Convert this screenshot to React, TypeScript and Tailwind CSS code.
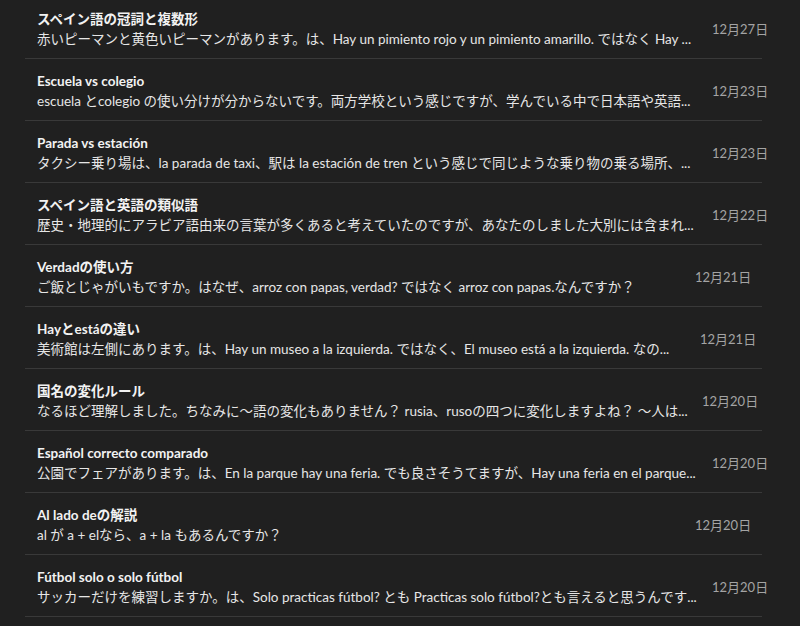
import React from 'react';

interface INote {
  title: string;
  body: string;
  date: string;
  dateClass: string;
}

const notes: INote[] = [
  {
    title: 'スペイン語の冠詞と複数形',
    body: '赤いピーマンと黄色いピーマンがあります。は、Hay un pimiento rojo y un pimiento amarillo. ではなく Hay ...',
    date: '12月27日',
    dateClass: 'ml-[19px]',
  },
  {
    title: 'Escuela vs colegio',
    body: 'escuela とcolegio の使い分けが分からないです。両方学校という感じですが、学んでいる中で日本語や英語...',
    date: '12月23日',
    dateClass: 'ml-[19px]',
  },
  {
    title: 'Parada vs estación',
    body: 'タクシー乗り場は、la parada de taxi、駅は la estación de tren という感じで同じような乗り物の乗る場所、...',
    date: '12月23日',
    dateClass: 'ml-[19px]',
  },
  {
    title: 'スペイン語と英語の類似語',
    body: '歴史・地理的にアラビア語由来の言葉が多くあると考えていたのですが、あなたのしました大別には含まれ...',
    date: '12月22日',
    dateClass: 'ml-[19px]',
  },
  {
    title: 'Verdadの使い方',
    body: 'ご飯とじゃがいもですか。はなぜ、arroz con papas, verdad? ではなく arroz con papas.なんですか？',
    date: '12月21日',
    dateClass: 'ml-[2px]',
  },
  {
    title: 'Hayとestáの違い',
    body: '美術館は左側にあります。は、Hay un museo a la izquierda. ではなく、El museo está a la izquierda. なの...',
    date: '12月21日',
    dateClass: 'ml-[7px]',
  },
  {
    title: '国名の変化ルール',
    body: 'なるほど理解しました。ちなみに〜語の変化もありません？ rusia、rusoの四つに変化しますよね？ 〜人は...',
    date: '12月20日',
    dateClass: 'ml-[9px]',
  },
  {
    title: 'Español correcto comparado',
    body: '公園でフェアがあります。は、En la parque hay una feria. でも良さそうてますが、Hay una feria en el parque...',
    date: '12月20日',
    dateClass: 'ml-[19px]',
  },
  {
    title: 'Al lado deの解説',
    body: 'al が a + elなら、a + la もあるんですか？',
    date: '12月20日',
    dateClass: 'ml-[2px]',
  },
  {
    title: 'Fútbol solo o solo fútbol',
    body: 'サッカーだけを練習しますか。は、Solo practicas fútbol? とも Practicas solo fútbol?とも言えると思うんです...',
    date: '12月20日',
    dateClass: 'ml-[19px]',
  },
];

const NoteRow: React.FC<{ note: INote }> = ({ note }) => (
  <div className="flex items-center border-b border-[#393939] pt-3 pb-[9px] pl-3">
    <div className="w-[656px] shrink-0 whitespace-nowrap">
      <div className="text-[13.5px] leading-5 font-bold text-[#f2f2f2]">{note.title}</div>
      <div className="text-[13.5px] leading-5 text-[#e6e6e6]">{note.body}</div>
    </div>
    <div className={`${note.dateClass} shrink-0 whitespace-nowrap pt-[2px] text-[13px] text-[#a4a4a4]`}>
      {note.date}
    </div>
  </div>
);

export default function App() {
  return (
    <div
      className="h-[626px] w-[800px] overflow-hidden bg-[#202020]"
      style={{ fontFamily: 'Lato, "Noto Sans CJK JP", sans-serif' }}
    >
      <div className="-mt-[3px] ml-[25px] w-[737px]">
        {notes.map((note) => (
          <NoteRow key={note.title} note={note} />
        ))}
      </div>
    </div>
  );
}
